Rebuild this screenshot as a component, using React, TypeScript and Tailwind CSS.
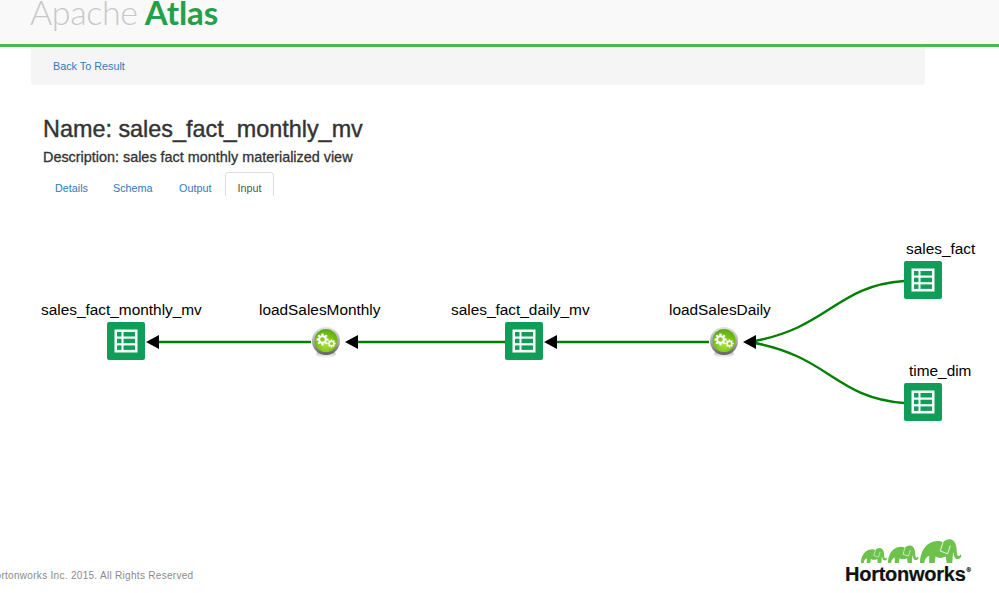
import React from "react";

function TableNode({ x, y }: { x: number; y: number }) {
  return (
    <div className="absolute w-[38px] h-[38px] rounded-[2px] bg-[#0f9d58] flex items-center justify-center" style={{ left: x, top: y }}>
      <svg width="24" height="24" viewBox="0 0 24 24">
        <rect x="0.5" y="0.5" width="23" height="23" fill="#fff" />
        <g fill="#0f9d58">
          <rect x="3" y="3" width="4.5" height="4.5" />
          <rect x="9.5" y="3" width="11.5" height="4.5" />
          <rect x="3" y="9.7" width="4.5" height="4.5" />
          <rect x="9.5" y="9.7" width="11.5" height="4.5" />
          <rect x="3" y="16.4" width="4.5" height="4.5" />
          <rect x="9.5" y="16.4" width="11.5" height="4.5" />
        </g>
      </svg>
    </div>
  );
}

function Gear({ cx, cy, r }: { cx: number; cy: number; r: number }) {
  const teeth = Array.from({ length: 8 }, (_, i) => i * 45);
  return (
    <g>
      {teeth.map((a) => (
        <rect key={a} x={cx - r * 0.24} y={cy - r * 1.25} width={r * 0.48} height={r * 0.6} fill="#fff" transform={`rotate(${a} ${cx} ${cy})`} />
      ))}
      <circle cx={cx} cy={cy} r={r * 0.7} fill="none" stroke="#fff" strokeWidth={r * 0.42} />
    </g>
  );
}

function ProcessNode({ x, y }: { x: number; y: number }) {
  return (
    <svg className="absolute" style={{ left: x, top: y }} width="30" height="34" viewBox="0 0 30 34">
      <defs>
        <linearGradient id="rim" x1="0" y1="0" x2="0" y2="1">
          <stop offset="0" stopColor="#e4e4e4" />
          <stop offset="0.55" stopColor="#a8a8a8" />
          <stop offset="1" stopColor="#5f5f5f" />
        </linearGradient>
        <radialGradient id="ball" cx="0.5" cy="0.7" r="0.65">
          <stop offset="0" stopColor="#a5e22e" />
          <stop offset="1" stopColor="#5fae10" />
        </radialGradient>
        <linearGradient id="shadow" x1="0" y1="0" x2="0" y2="1">
          <stop offset="0" stopColor="#aaa" />
          <stop offset="1" stopColor="#fff" />
        </linearGradient>
      </defs>
      <ellipse cx="15" cy="28" rx="10" ry="4" fill="url(#shadow)" />
      <circle cx="15" cy="15" r="14" fill="url(#rim)" />
      <circle cx="15" cy="14.5" r="11.5" fill="url(#ball)" />
      <Gear cx={11.5} cy={13.5} r={4.8} />
      <Gear cx={20.5} cy={17.5} r={3.3} />
    </svg>
  );
}

function Label({ x, y, children }: { x: number; y: number; children: React.ReactNode }) {
  return (
    <span className="absolute text-[15.4px] leading-[20px] text-black whitespace-nowrap" style={{ left: x, top: y }}>
      {children}
    </span>
  );
}

function Elephant({ x, s }: { x: number; s: number }) {
  return (
    <g transform={`translate(${x} ${26 - 27 * s}) scale(${s})`}>
      <path
        fill="#6cc24a"
        d="M0 27 C0 16 5 7 14 4 C18 2.5 22 3 25 4.5 C28 1 33 0 36 2.5 C39 5 40 10 40 15 C40 18 41 20 43 19 L44 17.5 L45 19 C44 24 38 24 37 19 L36 15 L35 27 H29 L28 20 C24 22 20 22 17 20 L16 27 H10 L10 19 C7 20 5 23 4.5 27 Z"
      />
      <path d="M25 4.5 L22 14 L30 17 M30 17 L33 8" fill="none" stroke="#fff" strokeWidth="0.9" />
    </g>
  );
}

function Logo() {
  return (
    <div className="w-[130px] flex flex-col">
      <svg width="104" height="28" viewBox="0 0 104 28" className="ml-[14px]">
        <Elephant x={2} s={0.58} />
        <Elephant x={29} s={0.68} />
        <Elephant x={61} s={0.92} />
      </svg>
      <span className="text-[20px] leading-[19px] font-bold tracking-[-0.25px] text-[#111] whitespace-nowrap [-webkit-text-stroke:0.2px_#111]">
        Hortonworks<sup className="text-[6px] font-normal top-[-9px] ml-[1px]">®</sup>
      </span>
    </div>
  );
}

export default function App() {
  return (
    <div className="w-[999px] h-[593px] overflow-hidden bg-white font-['Liberation_Sans',sans-serif] text-[#333] flex flex-col">
      <header className="h-[47px] shrink-0 bg-[#f9f9f9] border-b-[3px] border-[#4fb84c] overflow-hidden pl-[30px]">
        <div className="flex items-baseline gap-[7px] mt-[-12px] font-['Lato',sans-serif] text-[34px] leading-[48px]">
          <span className="font-light text-[#c8c8c8] tracking-[-0.35px]">Apache</span>
          <span className="font-bold text-[#23a04a] text-[33px]">Atlas</span>
        </div>
      </header>

      <nav className="ml-[31px] w-[894px] h-[38px] shrink-0 bg-[#f5f5f5] rounded-b-[4px] pl-[22px] flex items-center">
        <a className="text-[10.8px] text-[#337ab7] mt-[1px]">Back To Result</a>
      </nav>

      <main className="pl-[43px]">
        <h1 className="mt-[30px] text-[23.4px] leading-[28px] font-normal text-[#333] [-webkit-text-stroke:0.4px_#333]">Name: sales_fact_monthly_mv</h1>
        <h2 className="mt-[5px] text-[14.4px] leading-[18px] text-[#333] [-webkit-text-stroke:0.3px_#333]">Description: sales fact monthly materialized view</h2>
        <ul className="mt-[6px] flex items-stretch h-[24px] text-[10.8px] leading-[16px]">
          <li className="pl-[12px] w-[70px] pt-[8px] text-[#337ab7]">Details</li>
          <li className="w-[66px] pt-[8px] text-[#337ab7]">Schema</li>
          <li className="w-[46px] pt-[8px] text-[#337ab7]">Output</li>
          <li className="w-[49px] border border-b-0 border-[#dddddd] rounded-t-[4px] pt-[7px] text-center text-[#555]">Input</li>
        </ul>
      </main>

      <section className="relative w-[999px] h-[280px] shrink-0">
        <svg className="absolute left-0 top-0" width="999" height="280" viewBox="0 0 999 280" fill="none">
          <g stroke="#008000" strokeWidth="2.4">
            <path d="M155 146 H311" />
            <path d="M354 146 H505" />
            <path d="M553 146 H709" />
            <path d="M750 146 C830 132 835 90 904 85" />
            <path d="M750 146 C830 160 835 202 904 207" />
          </g>
          <g fill="#000">
            <path d="M146 146 L159 139 V153 Z" />
            <path d="M345 146 L358 139 V153 Z" />
            <path d="M544 146 L557 139 V153 Z" />
            <path d="M743 146 L756 139 V153 Z" />
          </g>
        </svg>
        <Label x={41} y={104}>sales_fact_monthly_mv</Label>
        <Label x={259} y={104}>loadSalesMonthly</Label>
        <Label x={451} y={104}>sales_fact_daily_mv</Label>
        <Label x={669} y={104}>loadSalesDaily</Label>
        <Label x={906} y={43}>sales_fact</Label>
        <Label x={909} y={165}>time_dim</Label>
        <TableNode x={107} y={126} />
        <TableNode x={505} y={126} />
        <TableNode x={904} y={65} />
        <TableNode x={904} y={187} />
        <ProcessNode x={311} y={130} />
        <ProcessNode x={709} y={130} />
      </section>

      <footer className="mt-[61px] flex justify-between items-end pr-[24px]">
        <span className="ml-[-12px] mb-[1px] text-[10px] leading-[14px] tracking-[0.3px] text-[#8a8a8a] whitespace-nowrap">
          Hortonworks Inc. 2015. All Rights Reserved
        </span>
        <Logo />
      </footer>
    </div>
  );
}
